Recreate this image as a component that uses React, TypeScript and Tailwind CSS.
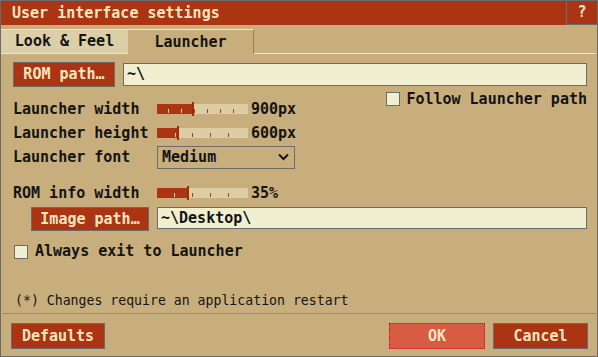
import type { ReactNode } from "react"

const font = { fontFamily: '"DejaVu Sans Mono", "Liberation Mono", monospace' }

function Slider({ fill, ticks }: { fill: number; ticks: number[] }) {
  return (
    <div className="relative w-[91px] h-[10px] bg-[#dccda4]">
      <div className="absolute left-0 top-0 h-full bg-[#ab3412]" style={{ width: fill }} />
      {ticks.map((t) => (
        <div
          key={t}
          className={`absolute top-[5px] h-[4px] w-[1px] ${t < fill ? "bg-[#ecdcb4]" : "bg-[#b63a16]"}`}
          style={{ left: t }}
        />
      ))}
      <div className="absolute top-[-2px] h-[14px] w-[2px] bg-[#9c2c0c]" style={{ left: fill }} />
    </div>
  )
}

function RedButton({ children, className }: { children: ReactNode; className: string }) {
  return (
    <div
      className={`flex items-center justify-center border border-[#6b6b6b] bg-[#ab3412] font-bold text-[#f4e6be] ${className}`}
    >
      {children}
    </div>
  )
}

function Checkbox() {
  return <div className="h-[14px] w-[14px] border border-[#6b6b6b] bg-[#f0f0d0]" />
}

function SliderRow({ label, fill, ticks, value }: { label: string; fill: number; ticks: number[]; value: string }) {
  return (
    <div className="flex h-[24px] items-center">
      <div className="w-[144px]">{label}</div>
      <Slider fill={fill} ticks={ticks} />
      <div className="ml-[3px]">{value}</div>
    </div>
  )
}

export default function App() {
  return (
    <div
      className="flex h-[357px] w-[598px] flex-col border border-[#6b6b6b] bg-[#c9ae7d] text-[15px] font-bold leading-none text-[#141414]"
      style={font}
    >
      <div className="flex h-[24px] bg-[#ab3412] text-[#f4e6be]">
        <div className="flex flex-1 items-center pl-[11px]">User interface settings</div>
        <div className="flex w-[31px] items-center justify-center border-b border-l border-[#6b6b6b]">?</div>
      </div>

      <div className="mt-[4px] flex h-[25px]">
        <div className="flex w-[127px] items-center justify-center border-y border-[#f3e6bd] bg-[#dccfa7]">
          Look &amp; Feel
        </div>
        <div className="flex w-[126px] items-center justify-center border-r border-t border-r-[#9c8656] border-t-[#f7ebc3]">
          Launcher
        </div>
        <div className="mr-[1px] flex-1 border-b border-[#f3e6bd]" />
      </div>

      <div className="flex flex-1 flex-col pl-[12px] pr-[10px]">
        <div className="mt-[8px] flex items-center gap-[8px]">
          <RedButton className="h-[25px] w-[102px]">ROM path…</RedButton>
          <div className="flex h-[23px] flex-1 items-center border border-[#6b6b6b] bg-[#f0f0d0] pl-[3px]">~\</div>
        </div>

        <div className="flex justify-between">
          <div className="flex flex-col pt-[10px]">
            <SliderRow label="Launcher width" fill={35} ticks={[11, 24, 37, 50, 63, 76]} value="900px" />
            <SliderRow label="Launcher height" fill={20} ticks={[18, 35, 53, 71]} value="600px" />
            <div className="flex h-[24px] items-center">
              <div className="w-[144px]">Launcher font</div>
              <div className="flex h-[23px] w-[138px] items-center justify-between border border-[#6b6b6b] pl-[4px] pr-[5px]">
                <span>Medium</span>
                <svg width="11" height="8" viewBox="0 0 11 8">
                  <path d="M1 1.5 L5.5 6 L10 1.5" fill="none" stroke="#141414" strokeWidth="2" />
                </svg>
              </div>
            </div>
          </div>
          <div className="mt-[5px] flex h-[14px] items-center gap-[6px] self-start">
            <Checkbox />
            <span>Follow Launcher path</span>
          </div>
        </div>

        <div className="mt-[12px]">
          <SliderRow label="ROM info width" fill={30} ticks={[17, 35, 53, 71]} value="35%" />
        </div>

        <div className="mt-[2px] flex items-start gap-[8px] pl-[18px]">
          <RedButton className="h-[24px] w-[118px]">Image path…</RedButton>
          <div className="flex h-[22px] flex-1 items-center border border-[#6b6b6b] bg-[#f0f0d0] pl-[3px]">
            ~\Desktop\
          </div>
        </div>

        <div className="mt-[13px] flex items-center gap-[7px] pl-[1px]">
          <Checkbox />
          <span>Always exit to Launcher</span>
        </div>

        <div className="mb-[4px] mt-auto flex h-[16px] items-center pl-[2px] text-[13.2px] font-normal">
          (*) Changes require an application restart
        </div>
      </div>

      <div className="mx-[1px] h-[1px] bg-[#a08a5f]" />
      <div className="flex items-center pb-[7px] pl-[10px] pr-[9px] pt-[9px]">
        <RedButton className="h-[26px] w-[94px]">Defaults</RedButton>
        <div className="flex-1" />
        <div className="flex h-[26px] w-[96px] items-center justify-center border border-dotted border-[#c8101a] bg-[#d85b44] font-bold text-[#f4e6be]">
          OK
        </div>
        <RedButton className="ml-[8px] h-[26px] w-[95px]">Cancel</RedButton>
      </div>
    </div>
  )
}
